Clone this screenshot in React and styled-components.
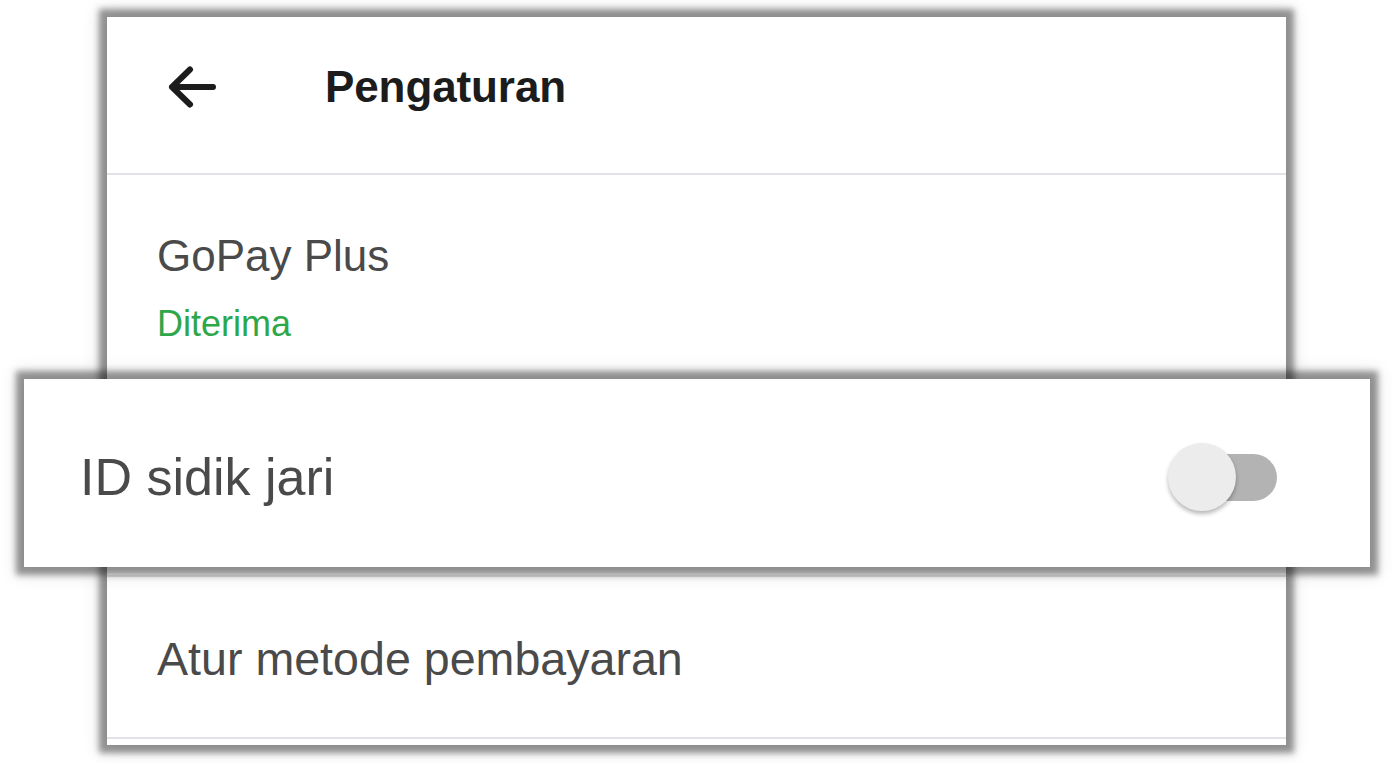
import React, { useState } from 'react';
import styled, { createGlobalStyle } from 'styled-components';

const Global = createGlobalStyle`
    html, body {
        margin:0;
        padding:0;
        background:#ffffff;
    }
    body {
        font-family:"Liberation Sans", Arial, sans-serif;
    }
`

const Page = styled.div`
    position:relative;
    width:1394px;
    height:763px;
    overflow:hidden;
    background:#fff;
    padding-top:17px;
    box-sizing:border-box;
`

const Card = styled.div`
    margin-left:107px;
    width:1179px;
    height:728px;
    background:#fff;
    box-shadow:0 0 6px 8px rgba(0,0,0,0.38), 0 0 16px 8px rgba(0,0,0,0.12);
    display:flex;
    flex-direction:column;
    overflow:hidden;
`

const Header = styled.div`
    height:158px;
    box-sizing:border-box;
    padding:0 0 16px 60px;
    display:flex;
    align-items:center;
    border-bottom:2px solid #e2e3e8;
`

const Back = styled.button`
    border:none;
    background:none;
    padding:0;
    width:50px;
    height:42px;
    display:flex;
    cursor:pointer;
`

const Title = styled.h1`
    margin:0 0 0 108px;
    font-size:44px;
    line-height:1.2;
    font-weight:700;
    color:#1c1c1c;
    letter-spacing:-0.1px;
`

const Row = styled.div`
    height:${props => props.h}px;
    box-sizing:border-box;
    padding:${props => props.pt}px 50px 0 50px;
    border-bottom:2px solid #e2e3e8;
    flex-shrink:0;
`

const Label = styled.div`
    font-size:${props => props.size || 44}px;
    line-height:1.2;
    color:#4a4a4a;
`

const Status = styled.div`
    margin-top:19px;
    font-size:36px;
    line-height:1.2;
    color:#2ea64a;
`

const Zoomed = styled.div`
    position:absolute;
    left:24px;
    top:379px;
    width:1346px;
    height:188px;
    box-sizing:border-box;
    padding:8px 93px 0 56px;
    background:#fff;
    display:flex;
    align-items:center;
    justify-content:space-between;
    box-shadow:0 0 6px 8px rgba(0,0,0,0.38), 0 0 16px 8px rgba(0,0,0,0.12);
`

const Switch = styled.div`
    position:relative;
    width:109px;
    height:68px;
    cursor:pointer;
`

const Track = styled.div`
    position:absolute;
    left:10px;
    right:0;
    top:11px;
    height:47px;
    border-radius:24px;
    background:${props => props.on ? '#8fd19e' : '#b3b3b3'};
`

const Thumb = styled.div`
    position:absolute;
    top:0;
    left:${props => props.on ? 41 : 0}px;
    width:68px;
    height:68px;
    border-radius:50%;
    background:${props => props.on ? '#2ea64a' : '#ececec'};
    box-shadow:0 3px 4px rgba(0,0,0,0.28);
`

const Toggle = ({ on, onClick }) => (
    <Switch onClick={onClick}>
        <Track on={on}/>
        <Thumb on={on}/>
    </Switch>
)

const App = () => {
    const [finger, setFinger] = useState(false);

    return (
        <Page>
            <Global/>
            <Card>
                <Header>
                    <Back aria-label='Kembali'>
                        <svg width='50' height='42' viewBox='0 0 50 42' fill='none'
                            stroke='#1c1c1c' strokeWidth='6' strokeLinecap='round' strokeLinejoin='round'>
                            <path d='M46 21H5M23 3.5L5 21l18 17.5'/>
                        </svg>
                    </Back>
                    <Title>Pengaturan</Title>
                </Header>

                <Row h={225} pt={55}>
                    <Label>GoPay Plus</Label>
                    <Status>Diterima</Status>
                </Row>

                {/* row under the zoomed copy */}
                <Row h={177} pt={60}/>

                <Row h={162} pt={55}>
                    <Label size={46.6}>Atur metode pembayaran</Label>
                </Row>
            </Card>

            <Zoomed>
                <Label size={52}>ID sidik jari</Label>
                <Toggle on={finger} onClick={() => setFinger(!finger)}/>
            </Zoomed>
        </Page>
    )
}

export default App;
